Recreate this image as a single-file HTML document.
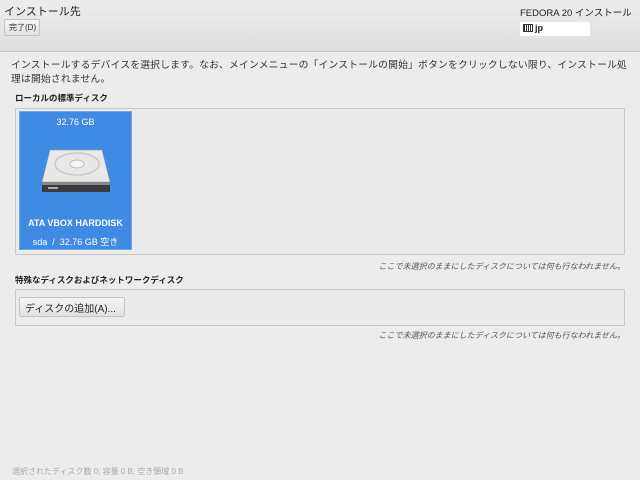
<!DOCTYPE html>
<html><head><meta charset="utf-8"><style>
*{margin:0;padding:0;box-sizing:border-box}
body{width:640px;height:480px;overflow:hidden;background:#ececec;font-family:"Liberation Sans","Noto Sans CJK JP",sans-serif;color:#2e3436;position:relative}
.hdr{position:absolute;left:0;top:0;width:640px;height:52px;background:linear-gradient(#ededed,#dedede);border-bottom:1px solid #c8c8c8}
.abs{position:absolute;white-space:nowrap}
.btn{position:absolute;border:1px solid #c4c4c4;border-radius:2px;background:linear-gradient(#f4f4f4,#e2e2e2)}
.panel{position:absolute;border:1px solid #c8c8c8;background:#ebebeb}
.note{font-size:8px;font-style:italic;color:#555}
</style></head><body>
<div class="hdr"></div>
<div class="abs" style="left:4px;top:3px;font-size:11px;color:#222">インストール先</div>
<div class="btn" style="left:4px;top:19px;width:36px;height:17px"></div>
<div class="abs" style="left:9px;top:22px;font-size:8px;color:#333">完了(D)</div>
<div class="abs" style="left:520px;top:5px;font-size:9.5px;color:#222">FEDORA 20 インストール</div>
<div class="abs" style="left:520px;top:22px;width:70px;height:14px;background:#fff"></div>
<div class="abs" style="left:523px;top:24px;width:10px;height:8px;border:1px solid #333;background:repeating-linear-gradient(90deg,#333 0 1px,#fff 1px 2px)"></div>
<div class="abs" style="left:535px;top:23px;font-size:9px;font-weight:bold;color:#222">jp</div>

<div class="abs" style="left:11px;top:59px;font-size:9.8px;letter-spacing:0.18px;line-height:14px;color:#333">インストールするデバイスを選択します。なお、メインメニューの「インストールの開始」ボタンをクリックしない限り、インストール処<br>理は開始されません。</div>
<div class="abs" style="left:15px;top:92px;font-size:8.5px;font-weight:bold;color:#222">ローカルの標準ディスク</div>

<div class="panel" style="left:15px;top:108px;width:610px;height:147px"></div>
<div class="abs" style="left:19px;top:111px;width:113px;height:139px;background:#3f8ae2;border:1px solid #6ea6e6"></div>
<div class="abs" style="left:19px;top:117px;width:113px;text-align:center;color:#fff;font-size:9px">32.76 GB</div>
<svg class="abs" style="left:40px;top:148px" width="72" height="48" viewBox="0 0 72 48">
<path d="M10 2 L62 2 L70 34 L2 34 Z" fill="#e8e8e8" stroke="#999" stroke-width="0.5"/>
<ellipse cx="37" cy="16" rx="22" ry="11" fill="none" stroke="#c8c8c8" stroke-width="1.5"/>
<ellipse cx="37" cy="16" rx="7" ry="4" fill="#f6f6f6" stroke="#bbb"/>
<rect x="2" y="34" width="68" height="10" fill="#3a3a3a"/>
<rect x="2" y="34" width="68" height="3" fill="#888"/>
<rect x="8" y="39" width="10" height="2" fill="#aaa"/>
</svg>
<div class="abs" style="left:19px;top:218px;width:113px;text-align:center;color:#fff;font-size:9px;font-weight:bold">ATA VBOX HARDDISK</div>
<div class="abs" style="left:19px;top:235px;width:113px;text-align:center;color:#fff;font-size:9px">sda &nbsp;/ &nbsp;32.76 GB 空き</div>

<div class="abs note" style="right:15px;top:261px">ここで未選択のままにしたディスクについては何も行なわれません。</div>
<div class="abs" style="left:15px;top:274px;font-size:8.5px;font-weight:bold;color:#222">特殊なディスクおよびネットワークディスク</div>
<div class="panel" style="left:15px;top:289px;width:610px;height:37px"></div>
<div class="btn" style="left:19px;top:297px;width:106px;height:20px"></div>
<div class="abs" style="left:25px;top:300px;font-size:10px;color:#222">ディスクの追加(A)...</div>
<div class="abs note" style="right:15px;top:330px">ここで未選択のままにしたディスクについては何も行なわれません。</div>

<div class="abs" style="left:12px;top:466px;font-size:8px;color:#a8a8a8">選択されたディスク数 0; 容量 0 B; 空き領域 0 B</div>
</body></html>
